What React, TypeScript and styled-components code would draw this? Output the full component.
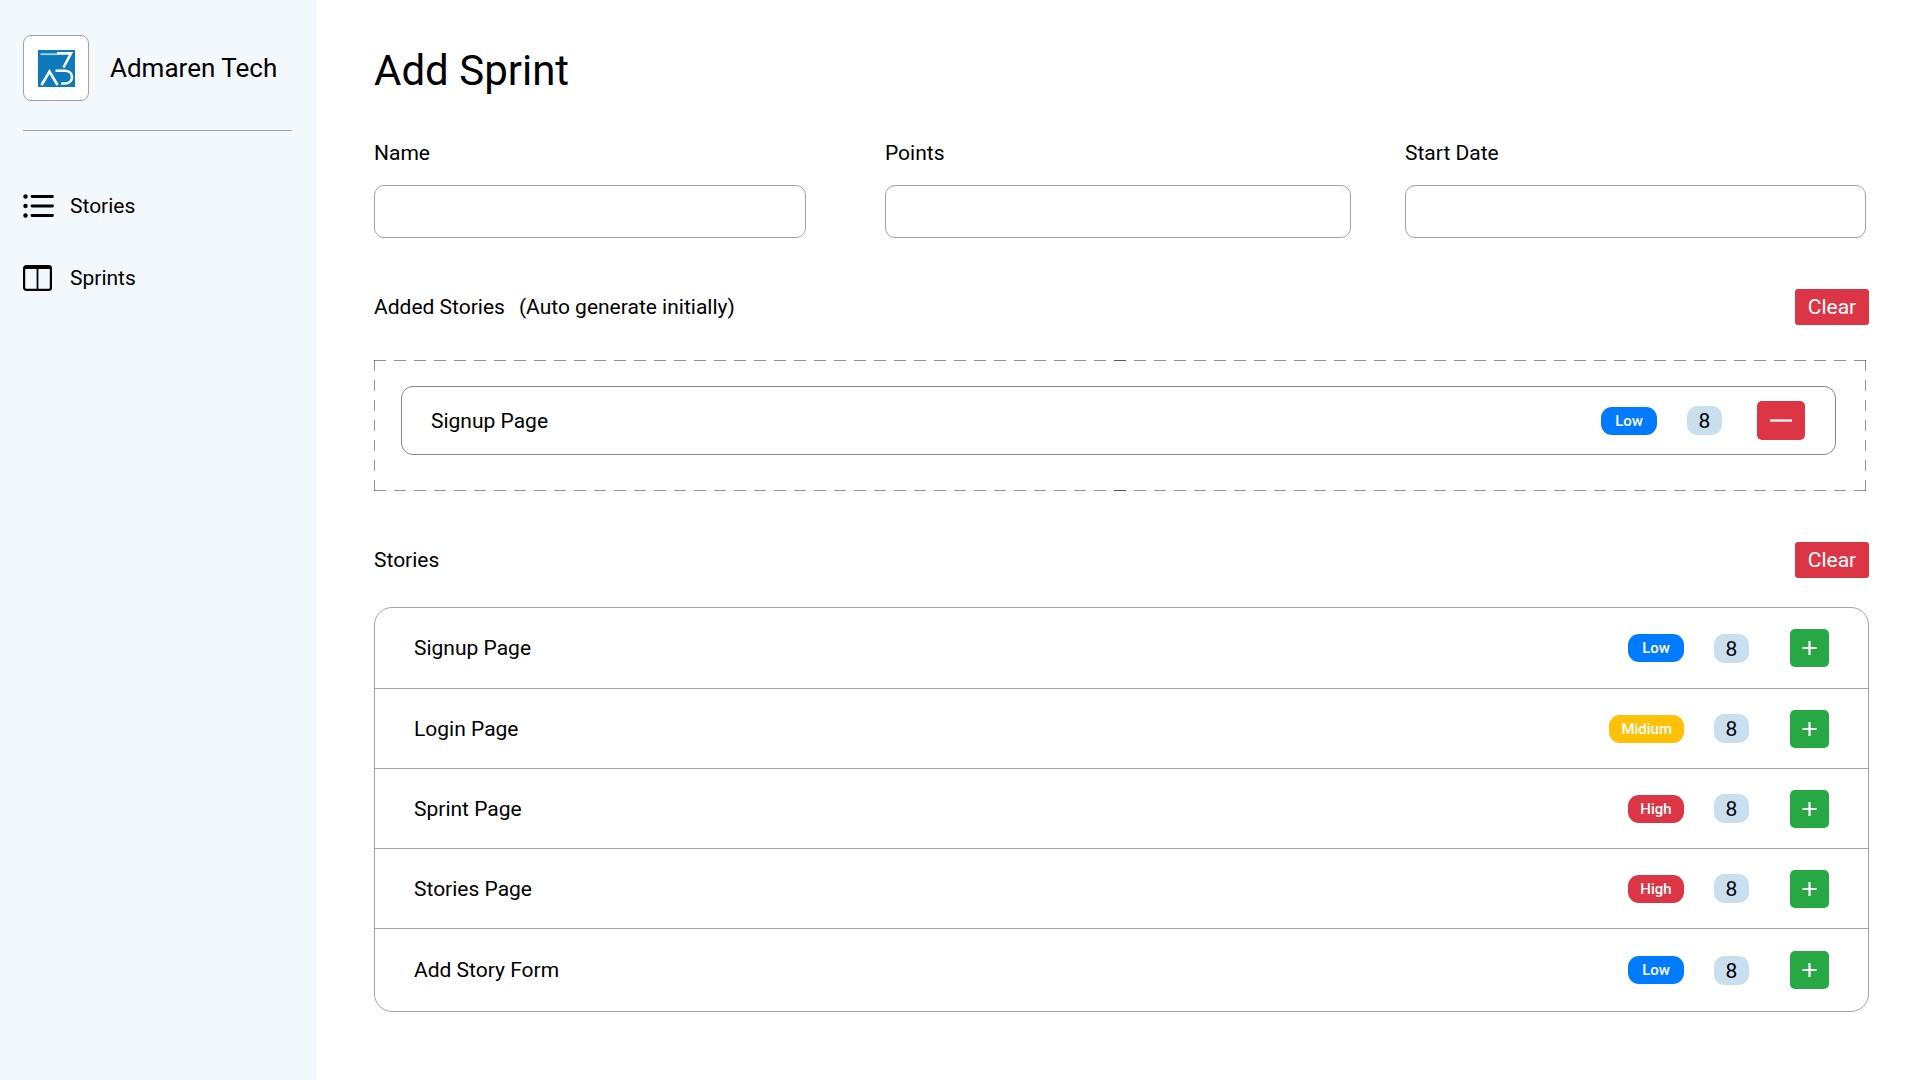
import React from 'react';
import styled, { createGlobalStyle } from 'styled-components';

const line = '#a3a3a3';
const dash = 'rgba(0, 0, 0, 0.42)';
const red = '#dc3545';
const priorityColors = { Low: '#007bff', Midium: '#ffc107', High: red };
type Priority = keyof typeof priorityColors;

const GlobalStyle = createGlobalStyle`
  *, *::before, *::after { box-sizing: border-box; }
  body {
    margin: 0;
    background: #fff;
    color: #000;
    font: 400 21px/24px Roboto, "Liberation Sans", sans-serif;
  }
  button, input { font: inherit; }
`;

const Page = styled.div`
  display: flex;
  min-height: 100vh;
`;

const Sidebar = styled.aside`
  flex: 0 0 317px;
  padding: 35px 25px 35px 23px;
  background: #f3f8fc;
`;

const Brand = styled.div`
  display: flex;
  align-items: center;
  gap: 21px;
  padding-bottom: 29px;
  border-bottom: 1px solid ${line};
`;

const LogoBox = styled.div`
  display: grid;
  place-items: center;
  width: 66px;
  height: 66px;
  border: 1px solid ${line};
  border-radius: 8px;
  background: #fff;
`;

const BrandName = styled.span`
  font-size: 26px;
  line-height: 32px;
  white-space: nowrap;
`;

const Nav = styled.nav`
  display: flex;
  flex-direction: column;
  gap: 40px;
  margin-top: 59px;
`;

const NavLink = styled.a`
  display: flex;
  align-items: center;
  gap: 14px;
  height: 32px;
  color: inherit;
  text-decoration: none;
`;

const Main = styled.main`
  flex: 1;
  min-width: 0;
  padding: 47px 51px 40px 57px;
`;

const Title = styled.h1`
  margin: 0;
  font-size: 42px;
  line-height: 48px;
  font-weight: 400;
`;

const Form = styled.form`
  display: grid;
  grid-template-columns: 457fr 466fr 461fr;
  column-gap: 54px;
  margin: 46px 3px 0 0;
`;

const Field = styled.label`
  display: flex;
  flex-direction: column;
  gap: 20px;

  &:first-child { padding-right: 25px; }
`;

const TextInput = styled.input`
  width: 100%;
  height: 53px;
  padding: 0 16px;
  border: 1px solid ${line};
  border-radius: 10px;
  background: #fff;
`;

const SectionHead = styled.div`
  display: flex;
  align-items: center;
  justify-content: space-between;
  margin-top: 51px;
`;

const SectionTitle = styled.h2`
  display: flex;
  gap: 14px;
  margin: 0;
  font-size: 21px;
  line-height: 24px;
  font-weight: 400;
`;

const ClearButton = styled.button`
  width: 74px;
  height: 36px;
  padding: 0;
  border: 0;
  border-radius: 3px;
  background: ${red};
  color: #fff;
`;

/* The horizontal dashes run inwards from both corners and meet on one shared dash. */
const DropZone = styled.div`
  margin: 35px 3px 0 0;
  padding: 25px 29px 35px 26px;
  border: 1px solid transparent;
  background:
    repeating-linear-gradient(90deg, ${dash} 0 12px, transparent 12px 20px) left top / calc(50% + 6px) 1px no-repeat border-box,
    repeating-linear-gradient(270deg, ${dash} 0 12px, transparent 12px 20px) right top / calc(50% + 6px) 1px no-repeat border-box,
    repeating-linear-gradient(90deg, ${dash} 0 12px, transparent 12px 20px) left bottom / calc(50% + 6px) 1px no-repeat border-box,
    repeating-linear-gradient(270deg, ${dash} 0 12px, transparent 12px 20px) right bottom / calc(50% + 6px) 1px no-repeat border-box,
    repeating-linear-gradient(${dash} 0 11px, transparent 11px 20px) left / 1px 100% no-repeat border-box,
    repeating-linear-gradient(${dash} 0 11px, transparent 11px 20px) right / 1px 100% no-repeat border-box;
`;

const StoryCard = styled.div`
  display: flex;
  align-items: center;
  height: 69px;
  padding: 0 30px 0 29px;
  border: 1px solid #888;
  border-radius: 12px;
`;

const StoryList = styled.ul`
  margin: 29px 0 0;
  padding: 0;
  list-style: none;
  border: 1px solid ${line};
  border-radius: 18px;
`;

const StoryRow = styled.li`
  display: flex;
  align-items: center;
  height: 80px;
  padding: 0 39px 0 39px;

  & + & { border-top: 1px solid ${line}; }
  &:last-child { height: 83px; }
`;

const StoryName = styled.span`
  flex: 1;
`;

const PriorityBadge = styled.span<{ $priority: Priority }>`
  min-width: 56px;
  padding: 2px 12px;
  border-radius: 11px;
  background: ${({ $priority }) => priorityColors[$priority]};
  color: #fff;
  font-size: 15px;
  font-weight: 500;
  text-align: center;
`;

const PointsBadge = styled.span`
  width: 35px;
  margin-left: 30px;
  padding: 3px 0 2px;
  border-radius: 10px;
  background: #c9dfed;
  text-align: center;
`;

const IconButton = styled.button<{ $remove?: boolean }>`
  display: grid;
  place-items: center;
  width: ${({ $remove }) => ($remove ? 48 : 39)}px;
  height: ${({ $remove }) => ($remove ? 39 : 38)}px;
  margin-left: ${({ $remove }) => ($remove ? 35 : 41)}px;
  padding: 0;
  border: 0;
  border-radius: 5px;
  background: ${({ $remove }) => ($remove ? red : '#28a745')};
`;

const Logo = () => (
  <svg width="37" height="37" viewBox="0 0 37 37" fill="none" aria-hidden="true">
    <path fill="#0f7abb" d="M0 0h37v37H0z" />
    <path stroke="#a9d3ea" strokeWidth="1.8" d="M2.500 4.200h17" />
    <path stroke="#fff" strokeWidth="2.600" d="M19 3.400h14L25.500 17.500M3.500 35 11.500 21.500 19.500 35M17.500 20.800h9c10 0 10 12.700 0 12.700h-3.500" />
  </svg>
);

const ListIcon = () => (
  <svg width="33" height="24" viewBox="0 0 33 24" aria-hidden="true">
    <circle cx="2.500" cy="2.500" r="2.200" />
    <circle cx="2.500" cy="12" r="2.200" />
    <circle cx="2.500" cy="21.500" r="2.200" />
    <path stroke="#000" strokeWidth="2.800" strokeLinecap="round" d="M9 2.500h20.500M9 12h20.500M9 21.500h20.500" />
  </svg>
);

const ColumnsIcon = () => (
  <svg width="33" height="26" viewBox="0 0 33 26" fill="none" stroke="#000" aria-hidden="true">
    <rect x="1.100" y="1.100" width="26.800" height="23.800" rx="2.200" strokeWidth="2.200" />
    <path strokeWidth="3" d="M1.500 2.500h26" />
    <path strokeWidth="1.800" d="M14.500 3v22" />
  </svg>
);

const PlusIcon = () => (
  <svg width="15" height="14" viewBox="0 0 15 14" stroke="#fff" strokeWidth="2.200" aria-hidden="true">
    <path d="M0.500 7h14M7.500 0v14" />
  </svg>
);

const MinusIcon = () => (
  <svg width="22" height="3" viewBox="0 0 22 3" stroke="#fff" strokeWidth="2.200" aria-hidden="true">
    <path d="M0 1.500h22" />
  </svg>
);

interface Story {
  name: string;
  priority: Priority;
  points: number;
}

const addedStories: Story[] = [{ name: 'Signup Page', priority: 'Low', points: 8 }];

const stories: Story[] = [
  { name: 'Signup Page', priority: 'Low', points: 8 },
  { name: 'Login Page', priority: 'Midium', points: 8 },
  { name: 'Sprint Page', priority: 'High', points: 8 },
  { name: 'Stories Page', priority: 'High', points: 8 },
  { name: 'Add Story Form', priority: 'Low', points: 8 },
];

const StoryContent = ({ story, remove }: { story: Story; remove?: boolean }) => (
  <>
    <StoryName>{story.name}</StoryName>
    <PriorityBadge $priority={story.priority}>{story.priority}</PriorityBadge>
    <PointsBadge>{story.points}</PointsBadge>
    <IconButton type="button" $remove={remove} aria-label={`${remove ? 'Remove' : 'Add'} ${story.name}`}>
      {remove ? <MinusIcon /> : <PlusIcon />}
    </IconButton>
  </>
);

export default function App() {
  return (
    <Page>
      <GlobalStyle />
      <Sidebar>
        <Brand>
          <LogoBox><Logo /></LogoBox>
          <BrandName>Admaren Tech</BrandName>
        </Brand>
        <Nav>
          <NavLink href="#stories"><ListIcon />Stories</NavLink>
          <NavLink href="#sprints"><ColumnsIcon />Sprints</NavLink>
        </Nav>
      </Sidebar>
      <Main>
        <Title>Add Sprint</Title>
        <Form>
          <Field>Name<TextInput name="name" /></Field>
          <Field>Points<TextInput name="points" /></Field>
          <Field>Start Date<TextInput name="startDate" /></Field>
        </Form>
        <SectionHead>
          <SectionTitle><span>Added Stories</span><span>(Auto generate initially)</span></SectionTitle>
          <ClearButton type="button">Clear</ClearButton>
        </SectionHead>
        <DropZone>
          {addedStories.map((story) => (
            <StoryCard key={story.name}><StoryContent story={story} remove /></StoryCard>
          ))}
        </DropZone>
        <SectionHead>
          <SectionTitle id="stories">Stories</SectionTitle>
          <ClearButton type="button">Clear</ClearButton>
        </SectionHead>
        <StoryList>
          {stories.map((story) => (
            <StoryRow key={story.name}><StoryContent story={story} /></StoryRow>
          ))}
        </StoryList>
      </Main>
    </Page>
  );
}
